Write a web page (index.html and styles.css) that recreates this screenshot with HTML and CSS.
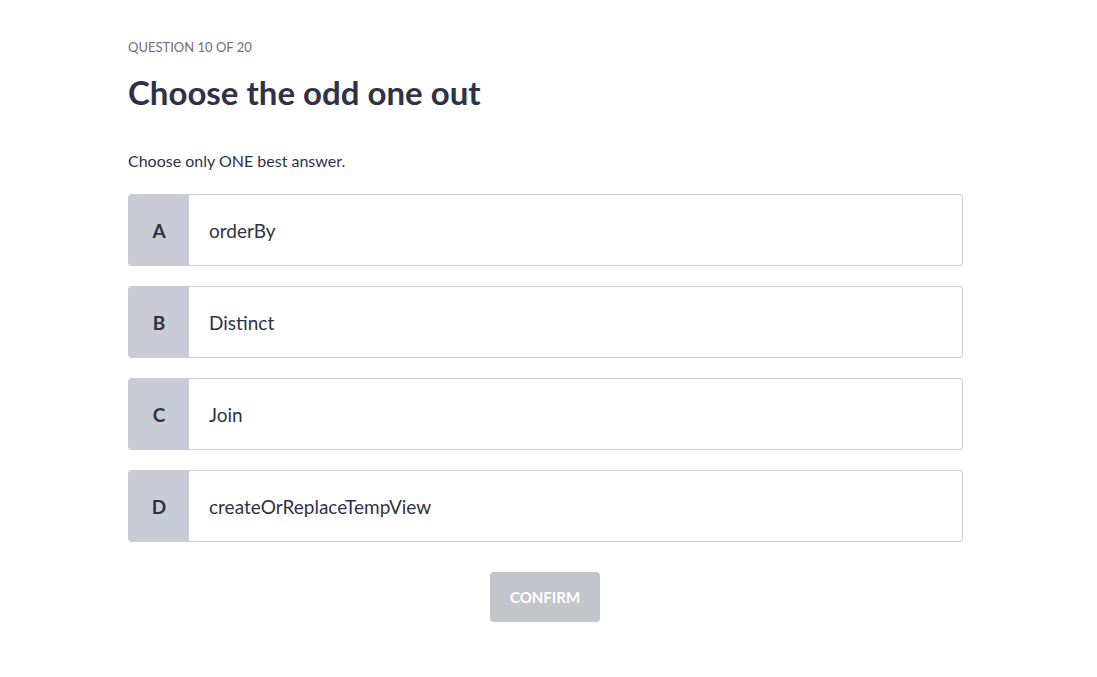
FILE: index.html
```html
<!DOCTYPE html>
<html lang="en">
<head>
<meta charset="utf-8">
<title>Question 10 of 20</title>
<link rel="stylesheet" href="styles.css">
</head>
<body>
<main class="quiz">
  <div class="counter">QUESTION 10 OF 20</div>
  <h1 class="title">Choose the odd one out</h1>
  <p class="hint">Choose only ONE best answer.</p>
  <ul class="options">
    <li class="option"><span class="letter">A</span><span class="label">orderBy</span></li>
    <li class="option"><span class="letter">B</span><span class="label">Distinct</span></li>
    <li class="option"><span class="letter">C</span><span class="label">Join</span></li>
    <li class="option"><span class="letter">D</span><span class="label">createOrReplaceTempView</span></li>
  </ul>
  <div class="actions"><button class="confirm" type="button" disabled>CONFIRM</button></div>
</main>
</body>
</html>
```
FILE: styles.css
```css
* { box-sizing: border-box; }
html, body { margin: 0; padding: 0; background: #ffffff; }
body {
  font-family: Lato, "Open Sans", "Liberation Sans", sans-serif;
  color: #2f3247;
}
.quiz {
  width: 835px;
  margin-left: 128px;
  padding-top: 39px;
}
.counter {
  font-size: 13px;
  line-height: 16px;
  color: #6f6e7c;
}
.title {
  margin: 17px 0 0;
  font-size: 33px;
  line-height: 40px;
  font-weight: 700;
  color: #2f3247;
}
.hint {
  margin: 39px 0 0;
  font-size: 16px;
  line-height: 20px;
}
.options {
  list-style: none;
  margin: 23px 0 0;
  padding: 0;
  display: flex;
  flex-direction: column;
  gap: 20px;
}
.option {
  display: flex;
  height: 72px;
  border: 1px solid #c9cad6;
  border-radius: 3px;
  overflow: hidden;
  background: #fff;
}
.letter {
  width: 60px;
  flex: none;
  background: #c9ccd6;
  display: flex;
  align-items: center;
  justify-content: center;
  font-size: 19px;
  font-weight: 700;
  color: #2f3247;
}
.label {
  display: flex;
  align-items: center;
  padding-left: 20px;
  font-size: 19px;
  color: #2f3247;
}
.actions {
  display: flex;
  justify-content: center;
  margin-top: 30px;
  padding-right: 1px;
}
.confirm {
  width: 110px;
  height: 50px;
  border: none;
  border-radius: 4px;
  background: #c4c5ca;
  color: #ffffff;
  font-family: inherit;
  font-size: 15px;
  font-weight: 700;
}
```
